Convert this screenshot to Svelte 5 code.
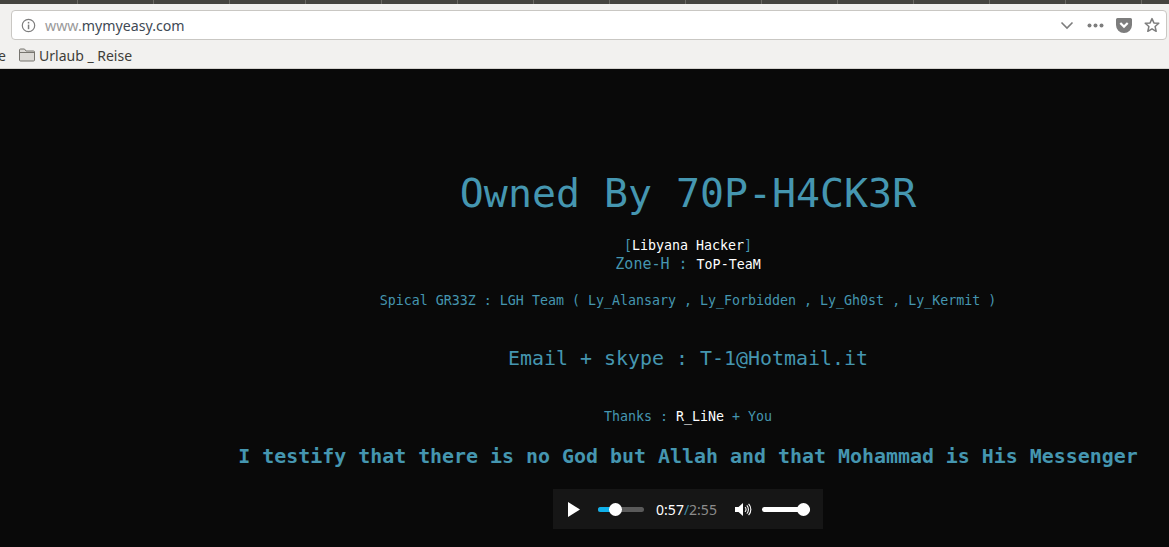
<script>
  const bookmark = "Urlaub _ Reise";
  const ticks = Array(15);
</script>

<div class="chrome">
  <div class="tabstrip">
    {#each ticks as _}<i></i>{/each}
  </div>
  <div class="urlbar">
    <svg class="info" width="15" height="15" viewBox="0 0 15 15">
      <circle cx="7.5" cy="7.5" r="6.2" fill="none" stroke="#7d7d7d" stroke-width="1.2" />
      <rect x="6.8" y="6.6" width="1.5" height="4.6" fill="#7d7d7d" />
      <rect x="6.8" y="3.9" width="1.5" height="1.6" fill="#7d7d7d" />
    </svg>
    <span class="url"><span class="dim">www.</span>mymyeasy.com</span>
    <svg class="chev" width="14" height="9" viewBox="0 0 14 9">
      <path d="M1.5 1.5 L7 7 L12.5 1.5" fill="none" stroke="#7d7d7d" stroke-width="1.6" />
    </svg>
    <svg class="dots" width="17" height="5" viewBox="0 0 17 5">
      <circle cx="2.5" cy="2.5" r="2" fill="#7d7d7d" />
      <circle cx="8.5" cy="2.5" r="2" fill="#7d7d7d" />
      <circle cx="14.5" cy="2.5" r="2" fill="#7d7d7d" />
    </svg>
    <svg class="pocket" width="16" height="15" viewBox="0 0 16 15">
      <path d="M1.5 0 H14.5 A1.5 1.5 0 0 1 16 1.5 V7 A8 8 0 0 1 0 7 V1.5 A1.5 1.5 0 0 1 1.5 0 Z" fill="#7d7d7d" />
      <path d="M4.3 5 L8 8.6 L11.7 5" fill="none" stroke="#fff" stroke-width="2.2" />
    </svg>
    <svg class="star" width="16" height="16" viewBox="0 0 16 16">
      <path d="M8 1.6 L9.9 5.9 L14.8 6.3 L11.1 9.5 L12.2 14.3 L8 11.8 L3.8 14.3 L4.9 9.5 L1.2 6.3 L6.1 5.9 Z" fill="none" stroke="#7d7d7d" stroke-width="1.5" stroke-linejoin="round" />
    </svg>
  </div>
  <div class="bookmarks">
    <span class="cut">e</span>
    <svg width="16" height="14" viewBox="0 0 16 14">
      <path d="M.5 12 V2 A1 1 0 0 1 1.5 1 H5.5 L7 3 H14.5 A1 1 0 0 1 15.5 4 V12 A1 1 0 0 1 14.5 13 H1.5 A1 1 0 0 1 .5 12 Z" fill="#dcdad6" stroke="#77756f" />
      <path d="M.5 4.5 H15.5" stroke="#77756f" />
    </svg>
    <span>{bookmark}</span>
  </div>
</div>

<main>
  <h1>Owned By 70P-H4CK3R</h1>
  <p class="small first">[<b>Libyana Hacker</b>]</p>
  <p class="zone">Zone-H : <b>ToP-TeaM</b></p>
  <p class="small greez">Spical GR33Z : LGH Team ( Ly_Alansary , Ly_Forbidden , Ly_Gh0st , Ly_Kermit )</p>
  <p class="mail">Email + skype : T-1@Hotmail.it</p>
  <p class="small thanks">Thanks : <b>R_LiNe</b> + You</p>
  <p class="testify">I testify that there is no God but Allah and that Mohammad is His Messenger</p>

  <div class="player">
    <svg class="play" width="14" height="15" viewBox="0 0 14 15">
      <path d="M1 0 L13 7.5 L1 15 Z" fill="#fff" />
    </svg>
    <div class="seek"><div class="seek-fill"></div><div class="thumb"></div></div>
    <span class="time">0:57<span class="slash"> / </span><span class="total">2:55</span></span>
    <svg class="vol" width="17" height="15" viewBox="0 0 17 15">
      <path d="M0 5 H3.5 L8 1 V14 L3.5 10 H0 Z" fill="#fff" />
      <path d="M10 5.2 A3 3 0 0 1 10 9.8 M11.8 3.4 A6 6 0 0 1 11.8 11.6 M13.6 1.8 A8.4 8.4 0 0 1 13.6 13.2" fill="none" stroke="#fff" stroke-width="1.1" />
    </svg>
    <div class="volume"><div class="thumb"></div></div>
  </div>
</main>

<style>
  :global(body) {
    background: #090909;
    overflow: hidden;
  }

  .chrome {
    height: 69px;
    background: #f2f1ef;
    border-bottom: 1px solid #d4d2ce;
    box-sizing: border-box;
    font-family: "Noto Sans", sans-serif;
  }

  .tabstrip {
    height: 4px;
    background: #45443f;
    display: flex;
    padding-left: 77px;
    gap: 75px;
  }
  .tabstrip i {
    width: 1px;
    flex: none;
    background: #6a6963;
  }

  .urlbar {
    margin: 6px 2px 0 11px;
    height: 30px;
    box-sizing: border-box;
    background: #fff;
    border: 1px solid #c9c7c3;
    border-radius: 4px;
    display: flex;
    align-items: center;
    padding-left: 9px;
    padding-right: 6px;
  }
  .url {
    margin-left: 9px;
    font-size: 14.2px;
    color: #3f4a55;
    flex: 1;
  }
  .dim {
    color: #9a9a9a;
  }
  .dots {
    margin-left: 13px;
  }
  .pocket {
    margin-left: 12px;
  }
  .star {
    margin-left: 12px;
  }

  .bookmarks {
    height: 28px;
    padding-top: 2px;
    box-sizing: border-box;
    display: flex;
    align-items: center;
    font-size: 14px;
    color: #3e3d39;
    gap: 4px;
    margin-left: -2px;
  }
  .cut {
    width: 8px;
    margin-right: 9px;
  }

  main {
    padding: 100px 0 0 207px;
    text-align: center;
    font-family: "DejaVu Sans Mono", monospace;
    color: #4596b0;
  }
  h1, p {
    margin: 0;
    white-space: pre;
  }
  h1 {
    font-size: 39.9px;
    font-weight: 400;
    line-height: 48px;
  }
  b {
    font-weight: 400;
    color: #fff;
  }
  .small {
    font-size: 13.3px;
    line-height: 18px;
    margin-top: 16px;
  }
  .small.first {
    margin-top: 20px;
  }
  .zone {
    font-size: 15px;
    line-height: 18px;
  }
  .zone b {
    font-size: 13.3px;
  }
  .small.greez {
    margin-top: 18px;
  }
  .mail {
    font-size: 19.93px;
    line-height: 28px;
    margin-top: 35px;
  }
  .small.thanks {
    margin-top: 35px;
  }
  .testify {
    font-size: 19.93px;
    font-weight: 700;
    line-height: 28px;
    margin-top: 17px;
  }

  .player {
    width: 270px;
    height: 40px;
    margin: 18px auto 0;
    background: #161616;
    display: flex;
    align-items: center;
    box-sizing: border-box;
    padding-left: 14px;
    font-family: "Noto Sans", sans-serif;
  }
  .seek {
    position: relative;
    margin-left: 17px;
    width: 46px;
    height: 5px;
    border-radius: 3px;
    background: #5a5a5a;
  }
  .seek-fill {
    width: 18px;
    height: 5px;
    border-radius: 3px 0 0 3px;
    background: #0fb0ea;
  }
  .thumb {
    position: absolute;
    top: -4px;
    width: 13px;
    height: 13px;
    border-radius: 50%;
    background: #fff;
    left: 11px;
  }
  .time {
    margin-left: 10px;
    font-size: 14px;
    color: #fff;
    white-space: pre;
    width: 65px;
    flex: none;
    word-spacing: 1px;
    margin-right: 0;
  }
  .slash {
    color: #3f8ca8;
  }
  .total {
    color: #8c8c8c;
  }
  .vol {
    margin-left: 16px;
  }
  .volume {
    position: relative;
    margin-left: 10px;
    width: 48px;
    height: 5px;
    border-radius: 3px;
    background: #fff;
  }
  .volume .thumb {
    left: 35px;
  }
</style>
